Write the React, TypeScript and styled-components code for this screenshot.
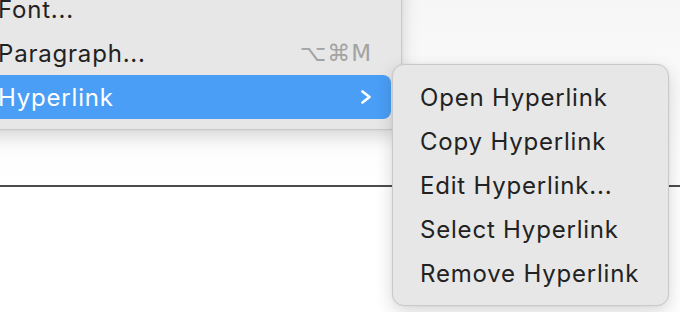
import styled, { createGlobalStyle } from 'styled-components';

const GlobalStyle = createGlobalStyle`
  html, body {
    margin: 0;
    padding: 0;
    width: 680px;
    height: 312px;
    overflow: hidden;
    background: #fcfcfc;
  }
  * { box-sizing: border-box; }
`;

const Canvas = styled.div`
  position: relative;
  width: 680px;
  height: 312px;
  overflow: hidden;
  padding-top: 185px;
  background: linear-gradient(180deg, #f6f6f6 0%, #ffffff 60%);
  font-family: 'Inter', 'Liberation Sans', sans-serif;
`;

const Rule = styled.div`
  height: 2px;
  background: #4c4c4c;
`;

const Menu = styled.div<{ $left: number; $top: number; $width: number }>`
  position: absolute;
  left: ${p => p.$left}px;
  top: ${p => p.$top}px;
  width: ${p => p.$width}px;
  padding: 10px;
  display: flex;
  flex-direction: column;
  background: #e7e7e7;
  border: 1px solid #c9c9c9;
  border-radius: 12px;
  box-shadow: 0 6px 18px rgba(0, 0, 0, 0.16), 0 0 2px rgba(0, 0, 0, 0.08);
`;

const Item = styled.div<{ $active?: boolean }>`
  height: 44px;
  padding: 0 19px 0 17px;
  display: flex;
  align-items: center;
  justify-content: space-between;
  border-radius: 8px;
  font-size: 24px;
  letter-spacing: 0.8px;
  color: ${p => (p.$active ? '#ffffff' : '#222222')};
  background: ${p => (p.$active ? '#4a9ef6' : 'transparent')};
  white-space: nowrap;
`;

const Shortcut = styled.span`
  font-family: 'DejaVu Sans', 'Inter', sans-serif;
  font-size: 23px;
  color: #a3a3a3;
  letter-spacing: 1px;
`;

const Chevron = () => (
  <svg width="12" height="14" viewBox="0 0 12 14">
    <polyline
      points="2.5,1.5 9.5,7 2.5,12.5"
      fill="none"
      stroke="#ffffff"
      strokeWidth="2.6"
      strokeLinecap="round"
      strokeLinejoin="round"
    />
  </svg>
);

const subItems = [
  'Open Hyperlink',
  'Copy Hyperlink',
  'Edit Hyperlink...',
  'Select Hyperlink',
  'Remove Hyperlink',
];

export default function App() {
  return (
    <>
      <GlobalStyle />
      <Canvas>
        <Rule />

        <Menu $left={-30} $top={-24} $width={432}>
          <Item>Font...</Item>
          <Item>
            <span>Paragraph...</span>
            <Shortcut>⌥⌘M</Shortcut>
          </Item>
          <Item $active>
            <span>Hyperlink</span>
            <Chevron />
          </Item>
        </Menu>

        <Menu $left={392} $top={64} $width={277}>
          {subItems.map(label => (
            <Item key={label}>{label}</Item>
          ))}
        </Menu>
      </Canvas>
    </>
  );
}
